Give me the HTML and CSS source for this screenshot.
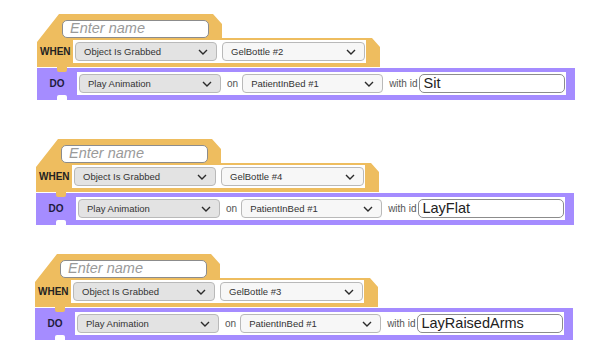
FILE: index.html
```html
<!DOCTYPE html>
<html lang="en">
<head>
	<meta charset="UTF-8">
	<title>Rules</title>
	<link rel="stylesheet" href="styles.css">
</head>
<body>
	<main class="rules">

		<div class="rule rule-1">
			<div class="trigger">
				<div class="name-row"><span class="name-field">Enter name</span></div>
				<div class="when-row">
					<span class="label">WHEN</span>
					<div class="slots">
						<div class="select event"><span>Object Is Grabbed</span><svg width="10" height="6" viewBox="0 0 10 6"><polyline points="1,1 5,5 9,1"/></svg></div>
						<div class="select target"><span>GelBottle #2</span><svg width="10" height="6" viewBox="0 0 10 6"><polyline points="1,1 5,5 9,1"/></svg></div>
					</div>
				</div>
			</div>
			<div class="action">
				<span class="label">DO</span>
				<div class="slots">
					<div class="select event"><span>Play Animation</span><svg width="10" height="6" viewBox="0 0 10 6"><polyline points="1,1 5,5 9,1"/></svg></div>
					<span class="word">on</span>
					<div class="select target"><span>PatientInBed #1</span><svg width="10" height="6" viewBox="0 0 10 6"><polyline points="1,1 5,5 9,1"/></svg></div>
					<span class="word">with id</span>
					<span class="id-field">Sit</span>
				</div>
			</div>
		</div>

		<div class="rule rule-2">
			<div class="trigger">
				<div class="name-row"><span class="name-field">Enter name</span></div>
				<div class="when-row">
					<span class="label">WHEN</span>
					<div class="slots">
						<div class="select event"><span>Object Is Grabbed</span><svg width="10" height="6" viewBox="0 0 10 6"><polyline points="1,1 5,5 9,1"/></svg></div>
						<div class="select target"><span>GelBottle #4</span><svg width="10" height="6" viewBox="0 0 10 6"><polyline points="1,1 5,5 9,1"/></svg></div>
					</div>
				</div>
			</div>
			<div class="action">
				<span class="label">DO</span>
				<div class="slots">
					<div class="select event"><span>Play Animation</span><svg width="10" height="6" viewBox="0 0 10 6"><polyline points="1,1 5,5 9,1"/></svg></div>
					<span class="word">on</span>
					<div class="select target"><span>PatientInBed #1</span><svg width="10" height="6" viewBox="0 0 10 6"><polyline points="1,1 5,5 9,1"/></svg></div>
					<span class="word">with id</span>
					<span class="id-field">LayFlat</span>
				</div>
			</div>
		</div>

		<div class="rule rule-3">
			<div class="trigger">
				<div class="name-row"><span class="name-field">Enter name</span></div>
				<div class="when-row">
					<span class="label">WHEN</span>
					<div class="slots">
						<div class="select event"><span>Object Is Grabbed</span><svg width="10" height="6" viewBox="0 0 10 6"><polyline points="1,1 5,5 9,1"/></svg></div>
						<div class="select target"><span>GelBottle #3</span><svg width="10" height="6" viewBox="0 0 10 6"><polyline points="1,1 5,5 9,1"/></svg></div>
					</div>
				</div>
			</div>
			<div class="action">
				<span class="label">DO</span>
				<div class="slots">
					<div class="select event"><span>Play Animation</span><svg width="10" height="6" viewBox="0 0 10 6"><polyline points="1,1 5,5 9,1"/></svg></div>
					<span class="word">on</span>
					<div class="select target"><span>PatientInBed #1</span><svg width="10" height="6" viewBox="0 0 10 6"><polyline points="1,1 5,5 9,1"/></svg></div>
					<span class="word">with id</span>
					<span class="id-field">LayRaisedArms</span>
				</div>
			</div>
		</div>

	</main>
</body>
</html>
```

FILE: styles.css
```css
* {
	box-sizing: border-box;
}
html,
body {
	margin: 0;
	background: #fff;
	font-family: 'Liberation Sans', Arial, sans-serif;
	color: #333;
}

.rules {
	padding-top: 14px;
}

.rule {
	width: 538px;
	margin-left: 37px;
}
.rule-2 {
	margin-top: 39px;
	margin-left: 36px;
}
.rule-3 {
	margin-top: 29px;
	margin-left: 35px;
}

/* yellow trigger: name tab + when row, one chamfered shape */
.trigger {
	width: 343px;
	height: 53px;
	background: #eebd5f;
	clip-path: polygon(22px 0, 176px 0, 185px 10px, 185px 24px, 335px 24px, 343px 33px, 343px 53px, 0 53px, 0 28px);
}

.name-row {
	height: 24px;
	padding: 6px 0 0 25px;
}

.name-field {
	display: block;
	width: 147px;
	height: 18px;
	padding-left: 7px;
	border: 1.5px solid #8c8c8c;
	border-radius: 5px;
	background: #fff;
	font-style: italic;
	font-size: 14.5px;
	line-height: 15px;
	color: #9a9a9a;
}

.when-row {
	display: flex;
	align-items: center;
	height: 29px;
	padding: 2px 0 4px 3px;
}

.label {
	font-weight: bold;
	font-size: 10px;
	color: #222;
}
.when-row .label {
	width: 31px;
	margin-right: 2px;
}

.slots {
	display: flex;
	align-items: center;
	height: 23px;
	padding: 2px 1px 2px 2px;
	background: #fff;
}

.select {
	display: flex;
	align-items: center;
	justify-content: space-between;
	height: 19px;
	padding: 0 8px 0 8px;
	border: 1px solid #b9b9b9;
	border-radius: 4px;
	font-size: 9.5px;
	color: #333;
}
.select svg {
	fill: none;
	stroke: #2b2b2b;
	stroke-width: 1.4;
}
.select.event {
	width: 142px;
	background: #e3e3e3;
}
.select.target {
	width: 143px;
	background: #f7f7f7;
}
.when-row .select.target {
	margin-left: 5px;
}

/* purple action row */
.action {
	position: relative;
	display: flex;
	align-items: center;
	height: 32px;
	margin-top: 1px;
	padding: 4px 9px 5px 0;
	background: #a58cff;
}
.action::before {
	content: '';
	position: absolute;
	left: 20px;
	top: -1px;
	width: 10px;
	height: 5px;
	background: #eebd5f;
	border-radius: 0 0 2px 2px;
}
.action::after {
	content: '';
	position: absolute;
	left: 20px;
	bottom: 0;
	width: 10px;
	height: 5px;
	background: #fff;
	border-radius: 2px 2px 0 0;
}
.action .label {
	width: 40px;
	text-align: center;
	color: #1e1b3d;
}
.action .slots {
	flex: 1;
}
.action .select.target {
	width: 141px;
}

.word {
	margin: 0 4px 0 6px;
	font-size: 10px;
	color: #555;
}

.id-field {
	display: block;
	flex: 1;
	height: 19px;
	margin-left: -2px;
	padding-left: 3px;
	border: 1.5px solid #8c8c8c;
	border-radius: 5px;
	font-size: 14.5px;
	line-height: 16px;
	color: #222;
}
```
